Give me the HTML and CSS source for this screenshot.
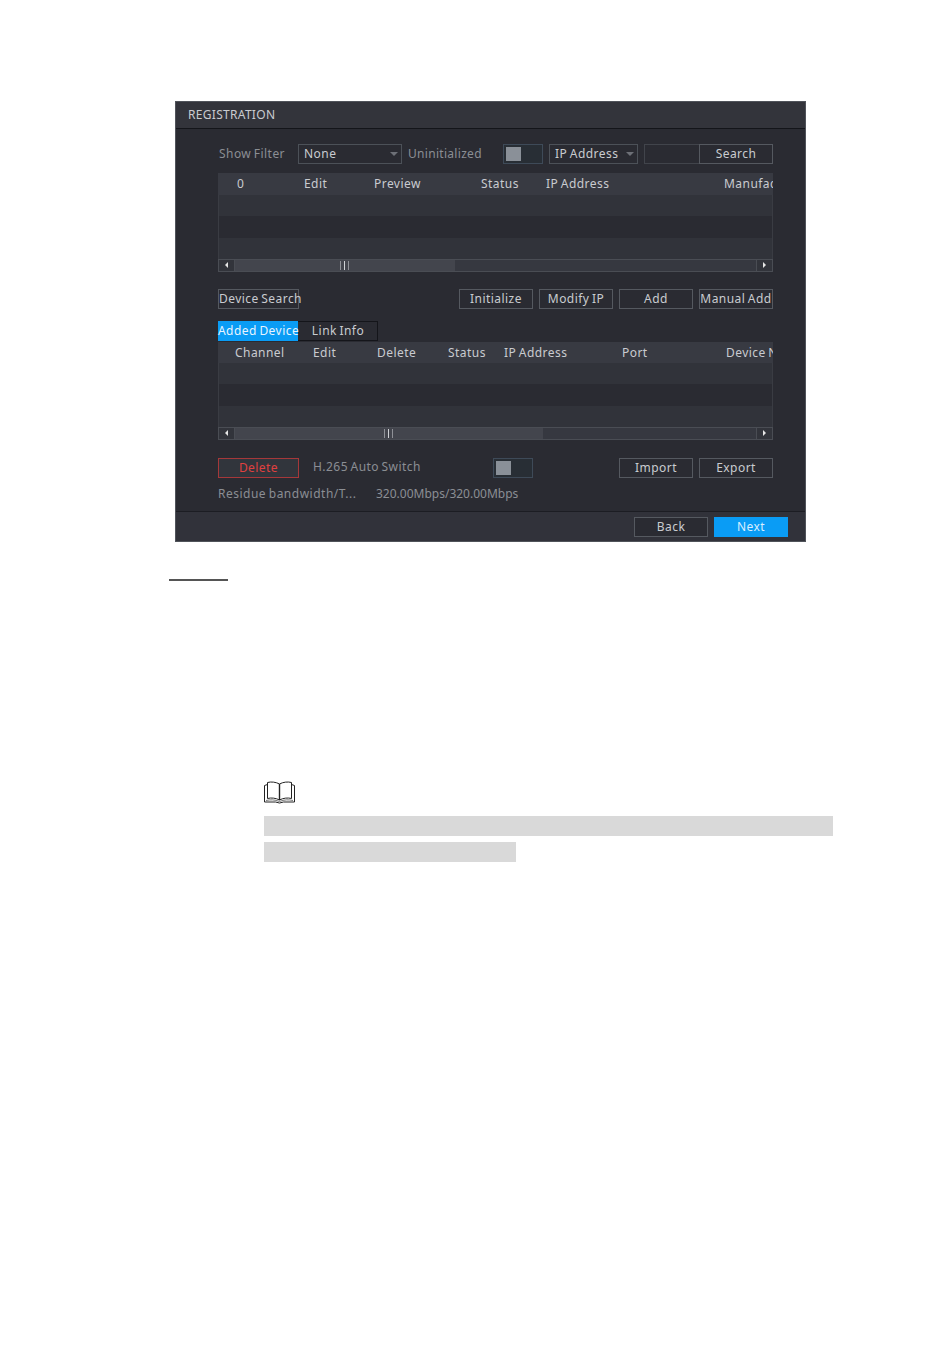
FILE: index.html
```html
<!DOCTYPE html>
<html lang="en">
<head>
    <meta charset="UTF-8">
    <meta name="viewport" content="width=device-width, initial-scale=1.0">
    <title>Registration</title>
    <link rel="stylesheet" href="styles.css">
</head>
<body>
    <div class="panel">
        <div class="panel-title">REGISTRATION</div>
        <div class="panel-body">
            <div class="filter-row">
                <span class="label label-filter">Show Filter</span>
                <div class="select select-none"><span>None</span><i class="caret"></i></div>
                <span class="label label-uninit">Uninitialized</span>
                <div class="switch"><i class="knob"></i></div>
                <div class="select select-ip"><span>IP Address</span><i class="caret"></i></div>
                <div class="search-group">
                    <div class="search-input"></div>
                    <button class="btn">Search</button>
                </div>
            </div>

            <div class="table">
                <div class="table-head cols-search">
                    <span>0</span><span>Edit</span><span>Preview</span><span>Status</span><span>IP Address</span><span>Manufacturer</span>
                </div>
                <div class="table-row"></div>
                <div class="table-row dark"></div>
                <div class="table-row"></div>
                <div class="scrollbar">
                    <div class="arrow"><i class="tri-left"></i></div>
                    <div class="track">
                        <div class="thumb thumb-search"><i class="grip"></i></div>
                    </div>
                    <div class="arrow"><i class="tri-right"></i></div>
                </div>
            </div>

            <div class="action-row">
                <button class="btn btn-device">Device Search</button>
                <div class="action-right">
                    <button class="btn">Initialize</button>
                    <button class="btn">Modify IP</button>
                    <button class="btn">Add</button>
                    <button class="btn">Manual Add</button>
                </div>
            </div>

            <div class="tabs">
                <div class="tab active">Added Device</div>
                <div class="tab">Link Info</div>
            </div>

            <div class="table table-added">
                <div class="table-head cols-added">
                    <span>Channel</span><span>Edit</span><span>Delete</span><span>Status</span><span>IP Address</span><span>Port</span><span>Device Name</span>
                </div>
                <div class="table-row"></div>
                <div class="table-row dark"></div>
                <div class="table-row"></div>
                <div class="scrollbar">
                    <div class="arrow"><i class="tri-left"></i></div>
                    <div class="track">
                        <div class="thumb thumb-added"><i class="grip"></i></div>
                    </div>
                    <div class="arrow"><i class="tri-right"></i></div>
                </div>
            </div>

            <div class="bottom-row">
                <button class="btn btn-delete">Delete</button>
                <span class="label label-h265">H.265 Auto Switch</span>
                <div class="switch"><i class="knob"></i></div>
                <div class="action-right">
                    <button class="btn">Import</button>
                    <button class="btn">Export</button>
                </div>
            </div>

            <div class="bandwidth-row">
                <span class="label label-residue">Residue bandwidth/T...</span>
                <span class="label label-rate">320.00Mbps/320.00Mbps</span>
            </div>
        </div>
        <div class="panel-footer">
            <button class="btn">Back</button>
            <button class="btn btn-next">Next</button>
        </div>
    </div>

    <div class="doc">
        <div class="doc-rule"></div>
        <svg class="note-icon" width="31" height="24" viewBox="0 0 31 24" fill="none" stroke="#222" stroke-width="1">
            <path d="M15.500 4 C12 2 7 1.500 3.500 2.500 L3.500 18.500 C7 17.500 12 18 15.500 20 C19 18 24 17.500 27.500 18.500 L27.500 2.500 C24 1.500 19 2 15.500 4 Z"/>
            <path d="M15.500 4 L15.500 20" stroke-width="1.400"/>
            <path d="M3.500 4.500 L0.500 5.500 L0.500 22 L11.500 22 Q15.500 24 19.500 22 L30.500 22 L30.500 5.500 L27.500 4.500"/>
            <path d="M2 20.500 C6 19.500 11 19.500 15.500 21.500 C20 19.500 25 19.500 29 20.500" stroke="#777"/>
        </svg>
        <div class="redacted redacted-long"></div>
        <div class="redacted redacted-short"></div>
    </div>
</body>
</html>
```

FILE: styles.css
```css
body {
  margin: 0;
  height: 1359px;
  overflow: hidden;
  background-color: #fff;
  font-family: 'Noto Sans', sans-serif;
  font-size: 12px;
  letter-spacing: 0.45px;
  word-spacing: -1px;
  color: #c9cbd0;
}

.panel {
  width: 631px;
  height: 441px;
  margin: 101px 0 0 175px;
  box-sizing: border-box;
  display: flex;
  flex-direction: column;
  background-color: #2a2b32;
  border: 1px solid #50535a;
}

.panel-title {
  height: 26px;
  flex: none;
  padding-left: 12px;
  line-height: 25px;
  letter-spacing: 0.3px;
  background-color: #33343b;
  border-bottom: 1px solid #14151a;
}

.panel-body {
  flex: 1;
  padding: 15px 32px 0 42px;
}

.label {
  color: #8b8e94;
  position: relative;
  top: -1px;
}

.filter-row {
  height: 20px;
  display: flex;
  align-items: center;
}

.label-filter {
  width: 79px;
  padding-left: 1px;
}

.label-uninit {
  width: 95px;
  margin-left: 6px;
  letter-spacing: 0.3px;
}

.select {
  height: 20px;
  box-sizing: border-box;
  display: flex;
  align-items: center;
  justify-content: space-between;
  padding: 0 3px 2px 5px;
  border: 1px solid #4c5158;
  color: #c9cbd0;
}

.select-none {
  width: 104px;
}

.select-ip {
  width: 89px;
  margin-left: 6px;
}

.caret {
  width: 0;
  height: 0;
  margin-top: 2px;
  border-left: 4px solid transparent;
  border-right: 4px solid transparent;
  border-top: 4px solid #6d7077;
}

.switch {
  width: 40px;
  height: 20px;
  flex: none;
  box-sizing: border-box;
  padding: 2px;
  background-color: #282e35;
  border: 1px solid #3e4a58;
}

.knob {
  display: block;
  width: 15px;
  height: 14px;
  background-color: #8a9098;
}

.search-group {
  display: flex;
  margin-left: 6px;
}

.search-input {
  width: 54px;
  height: 18px;
  border: 1px solid #41444b;
  border-right: none;
}

.btn {
  width: 74px;
  height: 20px;
  padding: 0 0 2px;
  box-sizing: border-box;
  flex: none;
  font-family: inherit;
  font-size: 12px;
  letter-spacing: 0.45px;
  word-spacing: -1px;
  white-space: nowrap;
  color: #c9cbd0;
  background-color: #2a2b32;
  border: 1px solid #555960;
}

.table {
  width: 555px;
  margin-top: 9px;
  overflow: hidden;
  background-color: #2a2b32;
}

.table-added {
  margin-top: 1px;
}

.table-head {
  height: 22px;
  box-sizing: border-box;
  padding-bottom: 2px;
  display: grid;
  align-items: center;
  white-space: nowrap;
  background-color: #383a42;
}

.table-added .table-head {
  height: 21px;
  padding-bottom: 0;
}

.cols-search {
  grid-template-columns: 67px 70px 107px 65px 178px 100px;
  padding-left: 19px;
}

.cols-added {
  grid-template-columns: 78px 64px 71px 56px 118px 104px 100px;
  padding-left: 17px;
}

.table-row {
  height: 21.333px;
  background-color: #31333a;
  border-left: 1px solid #3a3c43;
  border-right: 1px solid #3a3c43;
}

.table-row.dark {
  background-color: #2a2b32;
}

.scrollbar {
  height: 13px;
  box-sizing: border-box;
  display: flex;
  background-color: #363840;
  border: 1px solid #4a4d54;
}

.arrow {
  width: 15px;
  flex: none;
  display: flex;
  align-items: center;
  justify-content: center;
  background-color: #32343b;
}

.tri-left {
  border-top: 3px solid transparent;
  border-bottom: 3px solid transparent;
  border-right: 3px solid #e6e6e6;
}

.tri-right {
  border-top: 3px solid transparent;
  border-bottom: 3px solid transparent;
  border-left: 3px solid #e6e6e6;
}

.track {
  flex: 1;
  border-left: 1px solid #4a4d54;
  border-right: 1px solid #4a4d54;
}

.thumb {
  height: 100%;
  display: flex;
  align-items: center;
  justify-content: center;
  background-color: #43454d;
}

.thumb-search {
  width: 220px;
}

.thumb-added {
  width: 308px;
}

.grip {
  width: 7px;
  height: 9px;
  margin-right: 2px;
  background: linear-gradient(#d0d2d6, #d0d2d6) center / 1px 100% no-repeat;
  border-left: 1px solid #8f9197;
  border-right: 1px solid #8f9197;
}

.action-row {
  display: flex;
  justify-content: space-between;
  margin-top: 17px;
}

.action-right {
  display: flex;
  gap: 6px;
  margin-left: auto;
}

.btn-device {
  width: 81px;
}

.tabs {
  display: flex;
  margin-top: 12px;
}

.tab {
  width: 80px;
  height: 20px;
  box-sizing: border-box;
  padding-left: 1px;
  line-height: 18px;
  text-align: center;
  white-space: nowrap;
  border: 1px solid #14151a;
  border-left: none;
}

.tab.active {
  padding-left: 0;
  color: #e8f4ff;
  background-color: #0a9cf5;
  border: none;
  line-height: 20px;
}

.bottom-row {
  display: flex;
  align-items: center;
  margin-top: 18px;
}

.bottom-row .btn {
  padding-bottom: 3px;
}

.btn-delete {
  width: 81px;
  color: #e0403f;
  background-color: #31353c;
  border-color: #a5383a;
}

.label-h265 {
  width: 180px;
  margin-left: 14px;
}

.bandwidth-row {
  display: flex;
  margin-top: 8px;
  white-space: nowrap;
}

.label-residue {
  width: 158px;
  letter-spacing: 0.5px;
}

.label-rate {
  letter-spacing: 0;
}

.panel-footer {
  height: 30px;
  flex: none;
  box-sizing: border-box;
  display: flex;
  justify-content: flex-end;
  gap: 6px;
  padding: 5px 17px 0 0;
  background-color: #31323a;
  border-top: 1px solid #1c1d23;
}

.btn-next {
  color: #d8eeff;
  background-color: #0a9cf5;
  border-color: #0a9cf5;
}

.doc {
  padding-left: 264px;
}

.doc-rule {
  width: 59px;
  height: 2px;
  margin: 37px 0 0 -95px;
  background-color: #555;
}

.note-icon {
  display: block;
  margin-top: 199px;
}

.redacted {
  height: 20px;
  background-color: #d9d9d9;
}

.redacted-long {
  width: 569px;
  margin-top: 12px;
}

.redacted-short {
  width: 252px;
  margin-top: 6px;
}
```
